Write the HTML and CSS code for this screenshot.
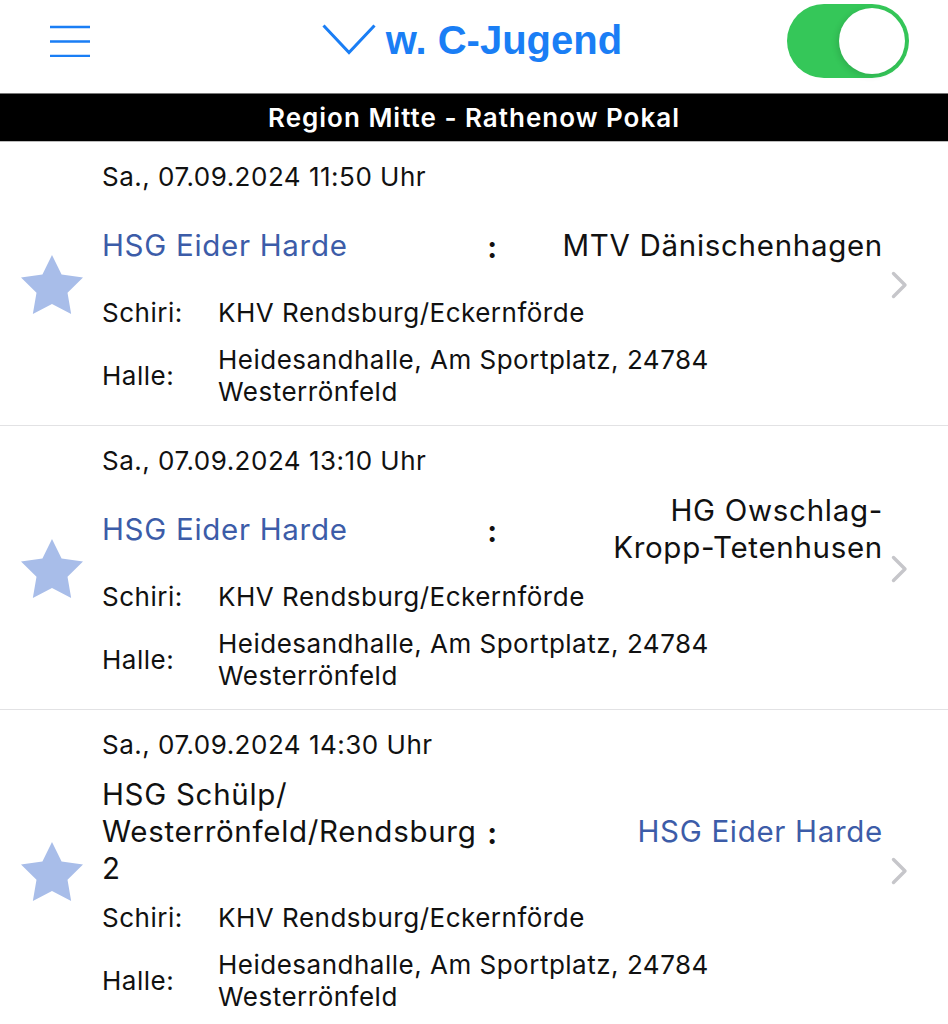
FILE: index.html
```html
<!DOCTYPE html>
<html lang="de">
<head>
    <meta charset="UTF-8">
    <meta name="viewport" content="width=device-width, initial-scale=1.0">
    <title>Spielplan w. C-Jugend</title>
    <link rel="stylesheet" href="styles.css">
</head>
<body>
    <header class="topbar">
        <button class="menu-btn" aria-label="Menü">
            <svg width="40" height="32" viewBox="0 0 40 32">
                <path d="M0 2h40M0 16.5h40M0 31h40" stroke="#1a7ef5" stroke-width="2.6" fill="none"/>
            </svg>
        </button>
        <div class="title">
            <svg class="title-chevron" width="54" height="31" viewBox="0 0 54 31">
                <polyline points="1.5,1.5 27,28.5 52.5,1.5" stroke="#1a7ef5" stroke-width="3" fill="none"/>
            </svg>
            <span>w. C-Jugend</span>
        </div>
        <div class="toggle on">
            <span class="knob"></span>
        </div>
    </header>

    <div class="section-bar">Region Mitte - Rathenow Pokal</div>

    <ul class="games">
        <li class="game">
            <div class="fav">
                <svg width="62" height="59" viewBox="2 2 20 19.02">
                    <polygon points="12,2 15.09,8.26 22,9.27 17,14.14 18.18,21.02 12,17.77 5.82,21.02 7,14.14 2,9.27 8.91,8.26" fill="#a8bde9"/>
                </svg>
            </div>
            <div class="game-body">
                <div class="game-date">Sa., 07.09.2024 11:50 Uhr</div>
                <div class="teams">
                    <div class="team home own">HSG Eider Harde</div>
                    <div class="vs">:</div>
                    <div class="team guest">MTV Dänischenhagen</div>
                </div>
                <div class="info">
                    <div class="info-label">Schiri:</div>
                    <div class="info-value">KHV Rendsburg/Eckernförde</div>
                </div>
                <div class="info hall">
                    <div class="info-label">Halle:</div>
                    <div class="info-value">Heidesandhalle, Am Sportplatz, 24784 Westerrönfeld</div>
                </div>
            </div>
            <div class="more">
                <svg width="17" height="28" viewBox="0 0 17 28">
                    <polyline points="2.5,2.5 14,14 2.5,25.5" stroke="#c6c6ca" stroke-width="3.4" stroke-linecap="round" stroke-linejoin="round" fill="none"/>
                </svg>
            </div>
        </li>

        <li class="game">
            <div class="fav">
                <svg width="62" height="59" viewBox="2 2 20 19.02">
                    <polygon points="12,2 15.09,8.26 22,9.27 17,14.14 18.18,21.02 12,17.77 5.82,21.02 7,14.14 2,9.27 8.91,8.26" fill="#a8bde9"/>
                </svg>
            </div>
            <div class="game-body">
                <div class="game-date">Sa., 07.09.2024 13:10 Uhr</div>
                <div class="teams">
                    <div class="team home own">HSG Eider Harde</div>
                    <div class="vs">:</div>
                    <div class="team guest">HG Owschlag-<span class="nowrap">Kropp-Tetenhusen</span></div>
                </div>
                <div class="info">
                    <div class="info-label">Schiri:</div>
                    <div class="info-value">KHV Rendsburg/Eckernförde</div>
                </div>
                <div class="info hall">
                    <div class="info-label">Halle:</div>
                    <div class="info-value">Heidesandhalle, Am Sportplatz, 24784 Westerrönfeld</div>
                </div>
            </div>
            <div class="more">
                <svg width="17" height="28" viewBox="0 0 17 28">
                    <polyline points="2.5,2.5 14,14 2.5,25.5" stroke="#c6c6ca" stroke-width="3.4" stroke-linecap="round" stroke-linejoin="round" fill="none"/>
                </svg>
            </div>
        </li>

        <li class="game">
            <div class="fav">
                <svg width="62" height="59" viewBox="2 2 20 19.02">
                    <polygon points="12,2 15.09,8.26 22,9.27 17,14.14 18.18,21.02 12,17.77 5.82,21.02 7,14.14 2,9.27 8.91,8.26" fill="#a8bde9"/>
                </svg>
            </div>
            <div class="game-body">
                <div class="game-date">Sa., 07.09.2024 14:30 Uhr</div>
                <div class="teams">
                    <div class="team home">HSG Schülp/<wbr>Westerrönfeld/Rendsburg 2</div>
                    <div class="vs">:</div>
                    <div class="team guest own">HSG Eider Harde</div>
                </div>
                <div class="info">
                    <div class="info-label">Schiri:</div>
                    <div class="info-value">KHV Rendsburg/Eckernförde</div>
                </div>
                <div class="info hall">
                    <div class="info-label">Halle:</div>
                    <div class="info-value">Heidesandhalle, Am Sportplatz, 24784 Westerrönfeld</div>
                </div>
            </div>
            <div class="more">
                <svg width="17" height="28" viewBox="0 0 17 28">
                    <polyline points="2.5,2.5 14,14 2.5,25.5" stroke="#c6c6ca" stroke-width="3.4" stroke-linecap="round" stroke-linejoin="round" fill="none"/>
                </svg>
            </div>
        </li>
    </ul>
</body>
</html>
```

FILE: styles.css
```css
body {
    margin: 0;
    font-family: Inter, "Liberation Sans", sans-serif;
    background-color: #fff;
    color: #111;
}

/* header */

.topbar {
    height: 93px;
    box-sizing: border-box;
    padding: 0 39px 12px 50px;
    display: grid;
    grid-template-columns: 1fr auto 1fr;
    align-items: center;
}

.menu-btn {
    justify-self: start;
    padding: 0;
    border: none;
    background: none;
    display: flex;
}

.title {
    margin-right: 15px;
    display: flex;
    align-items: center;
    gap: 10px;
    font-family: "Liberation Sans", Arial, sans-serif;
    font-weight: 700;
    font-size: 40px;
    color: #1a7ef5;
}

.title-chevron {
    margin-top: -2px;
}

.toggle {
    justify-self: end;
    width: 122px;
    height: 74px;
    box-sizing: border-box;
    padding: 4px;
    border-radius: 37px;
    background: #e5e5ea;
    display: flex;
    align-items: center;
}

.toggle.on {
    background: #35c759;
    justify-content: flex-end;
}

.toggle .knob {
    width: 66px;
    height: 66px;
    border-radius: 50%;
    background: #fff;
    box-shadow: -2px 2px 6px rgba(0, 0, 0, 0.12);
}

.section-bar {
    height: 49px;
    box-sizing: border-box;
    background: #000;
    color: #fff;
    border-top: 1px solid #777;
    border-bottom: 1px solid #bbb;
    font-weight: 600;
    font-size: 26px;
    letter-spacing: 1px;
    display: flex;
    align-items: center;
    justify-content: center;
}

/* game list */

.games {
    list-style: none;
    margin: 0;
    padding: 0;
}

.game {
    display: grid;
    grid-template-columns: 102px 1fr 65px;
    align-items: center;
    padding: 19px 0 17px;
    border-bottom: 1px solid #e2e2e4;
}

.fav {
    display: flex;
    justify-content: center;
    padding-left: 1px;
}

.more {
    padding-left: 8px;
    display: flex;
}

.game-date {
    font-size: 26px;
    letter-spacing: 0.5px;
    line-height: 32px;
}

.teams {
    margin-top: 15px;
    min-height: 74px;
    display: grid;
    grid-template-columns: 1fr 30px 1fr;
    align-items: center;
    font-size: 29.5px;
    letter-spacing: 0.7px;
    line-height: 37px;
}

.team.guest {
    text-align: right;
}

.team.own {
    color: #3c5ca8;
}

.vs {
    text-align: center;
    font-weight: 700;
    margin-top: 4px;
}

.nowrap {
    white-space: nowrap;
}

.info {
    display: grid;
    grid-template-columns: 116px 1fr;
    align-items: center;
    margin-top: 15px;
    font-size: 26px;
    letter-spacing: 0.5px;
    line-height: 32px;
}

.info-value {
    max-width: 620px;
}
```
